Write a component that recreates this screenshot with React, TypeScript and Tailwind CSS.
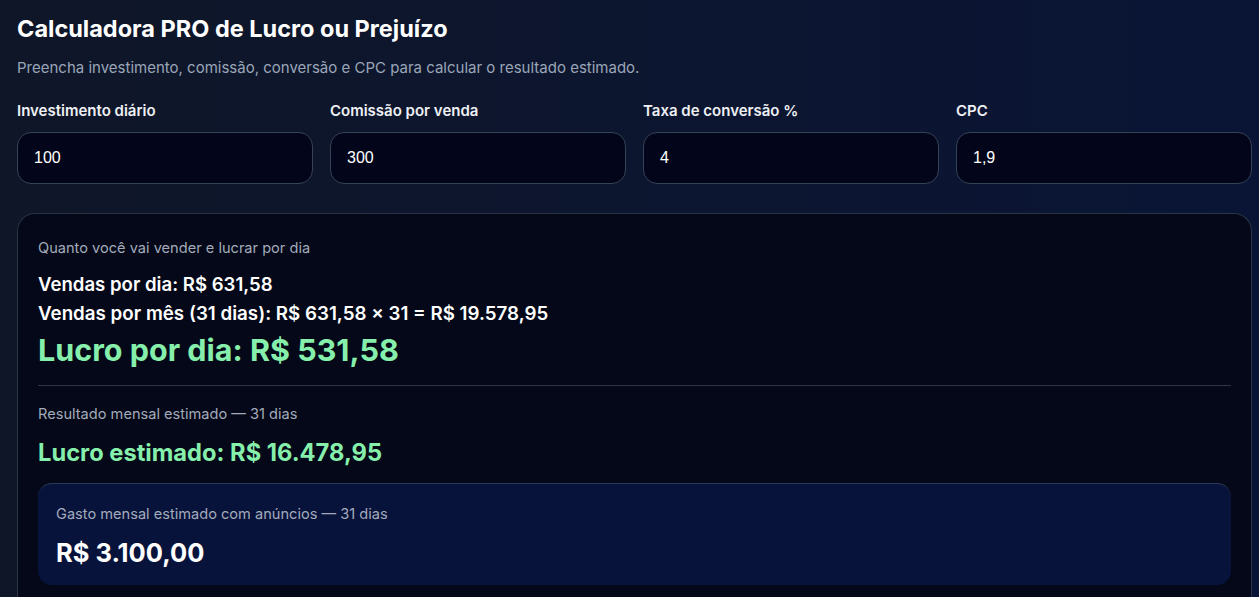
export default function App() {
  const fields = [
    { label: "Investimento diário", value: "100" },
    { label: "Comissão por venda", value: "300" },
    { label: "Taxa de conversão %", value: "4" },
    { label: "CPC", value: "1,9" },
  ];
  return (
    <div
      className="w-[1259px] h-[597px] overflow-hidden bg-gradient-to-r from-[#0f1628] to-[#0a1536] pl-[17px] pr-[7px] pt-[14px] text-white"
      style={{ fontFamily: "Inter, 'Noto Sans', sans-serif" }}
    >
      <h1 className="text-[23.5px] font-bold leading-[30px]">
        Calculadora PRO de Lucro ou Prejuízo
      </h1>
      <p className="mt-[14px] text-[15px] leading-[20px] text-[#9aa6b8]">
        Preencha investimento, comissão, conversão e CPC para calcular o resultado estimado.
      </p>
      <div className="mt-[22px] grid grid-cols-4 gap-[17px]">
        {fields.map((f) => (
          <div key={f.label} className="flex flex-col">
            <label className="text-[15px] font-semibold leading-[21px] text-[#eef0f4]">
              {f.label}
            </label>
            <div className="mt-[11px] h-[52px] rounded-[14px] border border-[#364257] bg-[#03061a] px-[16px] flex items-center">
              <span
                className="text-[16px] text-white"
                style={{ fontFamily: "'Liberation Sans', Arial, sans-serif" }}
              >
                {f.value}
              </span>
            </div>
          </div>
        ))}
      </div>
      <div className="mt-[29px] rounded-t-[18px] border border-b-0 border-[#2a3446] bg-[#040818] px-[20px] pt-[24px] pb-[20px] h-[400px]">
        <p className="text-[14.6px] leading-[20px] text-[#a3abbb]">
          Quanto você vai vender e lucrar por dia
        </p>
        <p className="mt-[14px] text-[18.6px] font-semibold leading-[24px]">
          Vendas por dia: R$ 631,58
        </p>
        <p className="mt-[6px] text-[18.75px] font-semibold leading-[24px]">
          Vendas por mês (31 dias): R$ 631,58 × 31 = R$ 19.578,95
        </p>
        <p className="mt-[4px] text-[30.5px] font-bold leading-[40px] text-[#86efac]">
          Lucro por dia: R$ 531,58
        </p>
        <div className="mt-[15px] h-px bg-[#2c3648]" />
        <p className="mt-[18px] text-[14.6px] leading-[20px] text-[#a3abbb]">
          Resultado mensal estimado — 31 dias
        </p>
        <p className="mt-[13px] text-[23.7px] font-bold leading-[32px] text-[#86efac]">
          Lucro estimado: R$ 16.478,95
        </p>
        <div className="mt-[14px] rounded-[14px] border-t border-[#2c3a58] bg-[#08133b] px-[18px] pt-[20px] pb-[16px]">
          <p className="text-[14.6px] leading-[20px] text-[#a3abbb]">
            Gasto mensal estimado com anúncios — 31 dias
          </p>
          <p className="mt-[13px] text-[25.5px] font-bold leading-[32px]">
            R$ 3.100,00
          </p>
        </div>
      </div>
    </div>
  );
}
